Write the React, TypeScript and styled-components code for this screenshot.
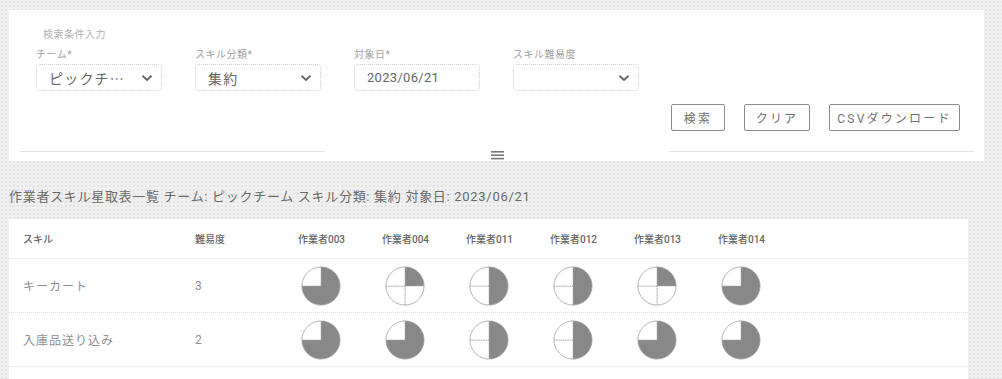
import * as React from "react";
import styled, { createGlobalStyle } from "styled-components";

const GlobalStyle = createGlobalStyle`
  html, body {
    margin: 0;
    padding: 0;
  }
  body {
    background-color: #f0f0f0;
    background-image: radial-gradient(#e2e2e2 0.7px, transparent 0.8px);
    background-size: 4px 4px;
    font-family: Roboto, "Noto Sans CJK JP", sans-serif;
    color: #666;
  }
`;

const Page = styled.div`
  width: 1002px;
  height: 379px;
  overflow: hidden;
  box-sizing: border-box;
  padding: 10px 18px 0 9px;
`;

const SearchPanel = styled.section`
  background: #fff;
  padding-top: 19px;
`;

const Caption = styled.div`
  margin-left: 34px;
  font-size: 10px;
  line-height: 12px;
  color: #b0b0b0;
  letter-spacing: 0.5px;
`;

const Fields = styled.div`
  display: flex;
  gap: 33px;
  padding-left: 27px;
  margin-top: 7px;
`;

const Field = styled.label`
  display: flex;
  flex-direction: column;
  width: 126px;
`;

const FieldLabel = styled.span`
  font-size: 10px;
  line-height: 14px;
  color: #a0a0a0;
  letter-spacing: 0.5px;
  margin-bottom: 2px;
`;

const Box = styled.div<{ $small?: boolean }>`
  height: 27px;
  box-sizing: border-box;
  border: 1px dotted #d0d0d0;
  border-radius: 4px;
  display: flex;
  align-items: center;
  padding: 0 8px 0 12px;
  font-size: ${(p) => (p.$small ? "13px" : "14px")};
  color: #666;
  letter-spacing: 0.3px;
`;

const Value = styled.span`
  flex: 1;
  font-family: "Noto Sans CJK JP", sans-serif;
  white-space: nowrap;
  overflow: hidden;
  text-overflow: ellipsis;
  max-width: 78px;
  letter-spacing: 1.2px;
  color: #666;
`;

const Chevron = styled.svg`
  margin-left: auto;
  flex: none;
`;

const Actions = styled.div`
  display: flex;
  justify-content: flex-end;
  gap: 19px;
  padding-right: 24px;
  margin-top: 13px;
`;

const Button = styled.button<{ $w: number }>`
  width: ${(p) => p.$w}px;
  height: 27px;
  background: #fff;
  border: 1px solid #8c8c8c;
  border-radius: 2px;
  font-family: Roboto, "Noto Sans CJK JP", sans-serif;
  font-size: 12px;
  color: #707070;
  letter-spacing: 2.2px;
  padding: 0;
`;

const Collapse = styled.div`
  display: grid;
  grid-template-columns: 305px 1fr 305px;
  align-items: start;
  padding: 0 10px 0 11px;
  margin-top: 20px;
  height: 10px;
`;

const Rule = styled.div`
  border-top: 1px solid #e3e3e3;
`;

const Handle = styled.svg`
  justify-self: center;
  margin-top: 0;
`;

const Title = styled.h2`
  margin: 27px 0 0;
  font-size: 13px;
  font-weight: 400;
  line-height: 18px;
  color: #6a6a6a;
  letter-spacing: 0.7px;
`;

const TablePanel = styled.section`
  background: #fff;
  margin-top: 13px;
  margin-right: 16px;
`;

const Row = styled.div<{ $head?: boolean }>`
  display: grid;
  grid-template-columns: 172px 103px repeat(6, 84px) 1fr;
  align-items: center;
  height: ${(p) => (p.$head ? "39px" : "54px")};
  padding-left: 14px;
  border-top: ${(p) => (p.$head ? "none" : "1px dotted #dedede")};
  box-sizing: border-box;
`;

const HeadCell = styled.div`
  font-size: 10px;
  font-weight: 500;
  color: #666;
`;

const Cell = styled.div`
  font-size: 12px;
  color: #8f8f8f;
  letter-spacing: 1px;
`;

const PieCell = styled.div`
  padding-left: 3px;
  display: flex;
  align-items: center;
`;

const workers = ["作業者003", "作業者004", "作業者011", "作業者012", "作業者013", "作業者014"];

const rows = [
  { skill: "キーカート", level: 3, marks: [3, 1, 2, 2, 1, 3] },
  { skill: "入庫品送り込み", level: 2, marks: [3, 3, 2, 2, 3, 3] },
];

const ChevronIcon = () => (
  <Chevron width="12" height="8" viewBox="0 0 12 8">
    <path d="M1.5 1.8 L6 6 L10.5 1.8" fill="none" stroke="#666" strokeWidth="1.9" />
  </Chevron>
);

// quadrants clockwise from 12 o'clock
const quadrant = (i: number) => {
  const c = 20;
  const r = 19;
  const pts = [
    [c, c - r],
    [c + r, c],
    [c, c + r],
    [c - r, c],
  ];
  const a = pts[i];
  const b = pts[(i + 1) % 4];
  return `M${c} ${c} L${a[0]} ${a[1]} A${r} ${r} 0 0 1 ${b[0]} ${b[1]} Z`;
};

const Pie = ({ filled }: { filled: number }) => (
  <svg width="40" height="40" viewBox="0 0 40 40">
    {[0, 1, 2, 3].map((i) =>
      i < filled ? (
        <path key={i} d={quadrant(i)} fill="#888" stroke="#888" strokeWidth="0.5" />
      ) : (
        <path
          key={i}
          d={quadrant(i)}
          fill="#fff"
          stroke="#a8a8a8"
          strokeWidth="0.8"
          strokeDasharray="1.2 0.6"
        />
      )
    )}
    <circle cx="20" cy="20" r="19" fill="none" stroke="#a8a8a8" strokeWidth="0.8" strokeDasharray="1.2 0.6" />
  </svg>
);

const App = () => {
  return (
    <>
      <GlobalStyle />
      <Page>
        <SearchPanel>
          <Caption>検索条件入力</Caption>
          <Fields>
            <Field>
              <FieldLabel>チーム*</FieldLabel>
              <Box>
                <Value>ピックチーム</Value>
                <ChevronIcon />
              </Box>
            </Field>
            <Field>
              <FieldLabel>スキル分類*</FieldLabel>
              <Box>
                <Value>集約</Value>
                <ChevronIcon />
              </Box>
            </Field>
            <Field>
              <FieldLabel>対象日*</FieldLabel>
              <Box $small>2023/06/21</Box>
            </Field>
            <Field>
              <FieldLabel>スキル難易度</FieldLabel>
              <Box>
                <Value />
                <ChevronIcon />
              </Box>
            </Field>
          </Fields>
          <Actions>
            <Button $w={54}>検索</Button>
            <Button $w={66}>クリア</Button>
            <Button $w={131}>CSVダウンロード</Button>
          </Actions>
          <Collapse>
            <Rule />
            <Handle width="13" height="9" viewBox="0 0 13 9">
              <rect x="0" y="0" width="13" height="1.6" fill="#777" />
              <rect x="0" y="3.4" width="13" height="1.6" fill="#777" />
              <rect x="0" y="6.8" width="13" height="1.6" fill="#777" />
            </Handle>
            <Rule />
          </Collapse>
        </SearchPanel>

        <Title>作業者スキル星取表一覧 チーム: ピックチーム スキル分類: 集約 対象日: 2023/06/21</Title>

        <TablePanel>
          <Row $head>
            <HeadCell>スキル</HeadCell>
            <HeadCell>難易度</HeadCell>
            {workers.map((w) => (
              <HeadCell key={w}>{w}</HeadCell>
            ))}
          </Row>
          {rows.map((r) => (
            <Row key={r.skill}>
              <Cell>{r.skill}</Cell>
              <Cell>{r.level}</Cell>
              {r.marks.map((m, i) => (
                <PieCell key={i}>
                  <Pie filled={m} />
                </PieCell>
              ))}
            </Row>
          ))}
          <Row />
        </TablePanel>
      </Page>
    </>
  );
};

export default App;
